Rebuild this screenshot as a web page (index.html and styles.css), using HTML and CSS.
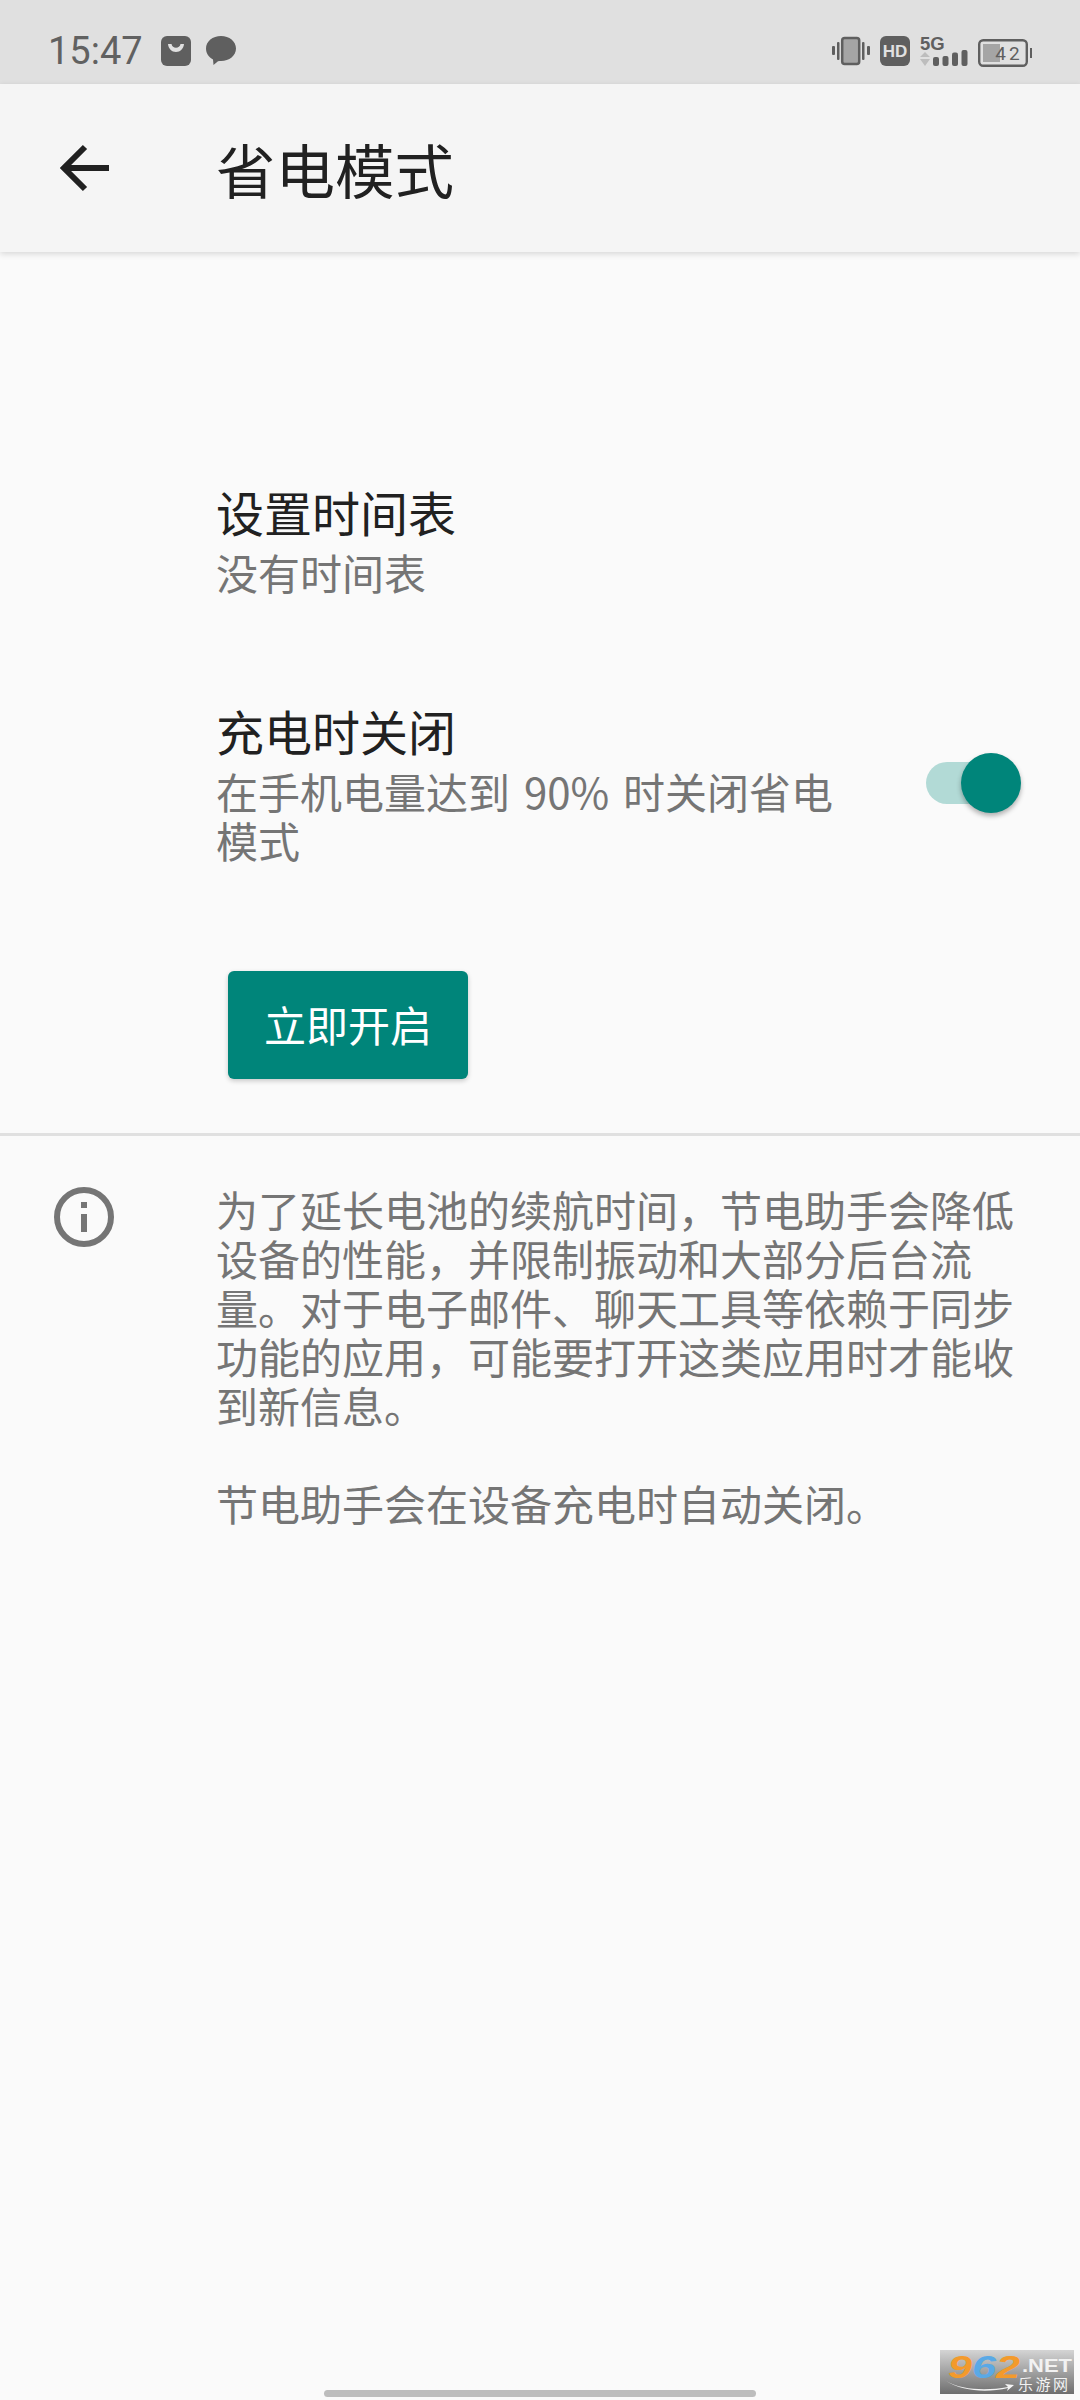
FILE: index.html
```html
<!DOCTYPE html>
<html lang="zh-CN">
<head>
<meta charset="UTF-8">
<title>省电模式</title>
<link rel="stylesheet" href="styles.css">
</head>
<body>
<div class="screen">
  <div class="status">
    <span class="time">15:47</span>
    <svg class="ico-bag" width="30" height="30" viewBox="0 0 30 30"><rect width="30" height="30" rx="6" fill="#5f5f5f"/><path d="M7 8h3.500c.5 2.500 2.300 3.800 4.500 3.800s4-1.300 4.500-3.800H23c-.4 4.700-3.700 8-8 8s-7.600-3.300-8-8z" fill="#e0e0e0"/></svg>
    <svg class="ico-chat" width="30" height="30" viewBox="0 0 30 30"><path d="M15 0c8.300 0 15 5.400 15 12.500S23.300 25 15 25c-.8 0-2 0-3 .2L7.500 29l-.5-5.600C2.800 21.200 0 17.200 0 12.500 0 5.400 6.700 0 15 0z" fill="#5f5f5f"/></svg>
    <span class="status-right">
      <svg width="38" height="30" viewBox="0 0 38 30"><rect x="10.200" y="2" width="17" height="26" rx="2.500" fill="#a5a5a5" stroke="#5f5f5f" stroke-width="2.500"/><rect x="5" y="6" width="2.500" height="18" rx="1" fill="#5f5f5f"/><rect x="30" y="6" width="2.500" height="18" rx="1" fill="#5f5f5f"/><rect x="0" y="10" width="3" height="9" rx="1" fill="#5f5f5f"/><rect x="35" y="10" width="3" height="9" rx="1" fill="#5f5f5f"/></svg>
      <svg width="30" height="30" viewBox="0 0 30 30"><rect width="30" height="30" rx="6" fill="#5f5f5f"/><text x="15" y="21" text-anchor="middle" class="ico-hd">HD</text></svg>
      <svg width="48" height="32" viewBox="0 0 48 32"><text x="0" y="15" class="ico-5g">5G</text><path d="M5 17l5 5H0zM5 31l-5-7h10z" fill="#bdbdbd"/><rect x="13" y="22" width="6" height="9" rx="2" fill="#5f5f5f"/><rect x="22.500" y="21" width="6" height="10" rx="2" fill="#5f5f5f"/><rect x="32" y="17.500" width="6" height="13.500" rx="2" fill="#5f5f5f"/><rect x="41.500" y="15" width="6" height="16" rx="2" fill="#5f5f5f"/></svg>
      <svg class="ico-battery" width="54" height="28" viewBox="0 0 54 28"><rect x="1.200" y="1.200" width="47.600" height="25.600" rx="4" fill="none" stroke="#5f5f5f" stroke-width="2.400"/><rect x="5" y="5" width="17" height="18" fill="#a5a5a5"/><rect x="52" y="9" width="2" height="10" fill="#5f5f5f"/><text x="31" y="21" text-anchor="middle" class="ico-batt">42</text></svg>
    </span>
  </div>

  <div class="toolbar">
    <svg class="back" width="49" height="48" viewBox="0 0 49 48"><path d="M49 24H4M25 3L4 24l21 21" fill="none" stroke="#212121" stroke-width="6"/></svg>
    <h1 class="title">省电模式</h1>
  </div>

  <div class="settings">
    <div class="row">
      <div class="row-text">
        <div class="row-title">设置时间表</div>
        <div class="row-sub">没有时间表</div>
      </div>
    </div>
    <div class="row row-charge">
      <div class="row-text">
        <div class="row-title">充电时关闭</div>
        <div class="row-sub">在手机电量达到 90% 时关闭省电模式</div>
      </div>
      <div class="switch"><span class="switch-thumb"></span></div>
    </div>
    <button class="btn">立即开启</button>
  </div>

  <div class="info">
    <svg class="info-ico" width="60" height="60" viewBox="0 0 60 60"><circle cx="30" cy="30" r="27" fill="none" stroke="#757575" stroke-width="6"/><rect x="27" y="15" width="6" height="6" fill="#757575"/><rect x="27" y="27" width="6" height="18" fill="#757575"/></svg>
    <div class="info-text">
      <p>为了延长电池的续航时间，节电助手会降低设备的性能，并限制振动和大部分后台流量。对于电子邮件、聊天工具等依赖于同步功能的应用，可能要打开这类应用时才能收到新信息。</p>
      <p>节电助手会在设备充电时自动关闭。</p>
    </div>
  </div>

  <div class="home-bar"></div>

  <svg class="mark" width="134" height="44" viewBox="0 0 134 44">
    <defs><linearGradient id="markbg" x1="0" y1="0" x2="0" y2="1"><stop offset="0" stop-color="#d4d4d4"/><stop offset="1" stop-color="#6e6e6e"/></linearGradient></defs>
    <rect width="134" height="44" fill="url(#markbg)"/>
    <text x="8" y="28" class="mark-num" textLength="72" lengthAdjust="spacingAndGlyphs"><tspan fill="#f39a2c">9</tspan><tspan fill="#5aa9e6">6</tspan><tspan fill="#f39a2c">2</tspan></text>
    <text x="82" y="22" class="mark-net" textLength="50" lengthAdjust="spacingAndGlyphs">.NET</text>
    <text x="78" y="40" class="mark-cn" textLength="50">乐游网</text>
    <path d="M6 31c16 9 40 10 62 6l-3-3 9 1-7 6 1-3c-22 5-46 3-62-7z" fill="#f4f4f4"/>
  </svg>
</div>
</body>
</html>
```

FILE: styles.css
```css
* { box-sizing: border-box; }
html, body { margin: 0; padding: 0; }
body {
  background: #fafafa;
  font-family: "Noto Sans CJK SC", Roboto, sans-serif;
  color: #212121;
}
.screen {
  position: relative;
  width: 1080px;
  height: 2400px;
  overflow: hidden;
  background: #fafafa;
}

/* status bar */
.status {
  height: 84px;
  background: #e0e0e0;
  display: flex;
  align-items: center;
  padding: 18px 48px 0;
  color: #616161;
}
.time {
  font-family: Roboto, sans-serif;
  font-size: 38px;
  width: 92px;
  margin-right: 21px;
  white-space: nowrap;
}
.ico-bag { margin-right: 15px; }
.status-right {
  margin-left: auto;
  display: flex;
  align-items: center;
  gap: 10px;
}
.status-right svg { display: block; overflow: visible; }
.ico-hd { font: 700 17px "Liberation Sans", sans-serif; fill: #e0e0e0; }
.ico-5g { font: 700 18.500px "Liberation Sans", sans-serif; fill: #5f5f5f; }
.ico-batt { font: 400 19px Roboto, sans-serif; fill: #5f5f5f; letter-spacing: 3px; }
.ico-battery { margin-top: 3px; }

/* toolbar */
.toolbar {
  height: 168px;
  background: #f5f5f5;
  display: flex;
  align-items: center;
  padding: 0 0 1px 60px;
  box-shadow: 0 2px 6px rgba(0, 0, 0, 0.14);
  position: relative;
}
.back { margin-right: 107px; margin-top: 1px; }
.title {
  margin: 0;
  font-size: 59.500px;
  font-weight: 400;
  line-height: 84px;
  color: #212121;
}

/* settings */
.settings {
  padding-top: 227px;
  height: 884px;
  border-bottom: 3px solid #e0e0e0;
}
.row {
  display: flex;
  align-items: center;
  padding-left: 216px;
}
.row-text { width: 640px; }
.row-charge { margin-top: 102px; }
.row-title {
  font-size: 48px;
  line-height: 64px;
  color: #212121;
}
.row-sub {
  font-size: 42px;
  line-height: 49px;
  margin-top: 4px;
  color: #757575;
  word-spacing: 4.500px;
}
.switch {
  position: relative;
  width: 74px;
  height: 42px;
  margin: 4px 0 0 70px;
  border-radius: 21px;
  background: #b2dad6;
}
.switch-thumb {
  position: absolute;
  right: -21px;
  top: -9px;
  width: 60px;
  height: 60px;
  border-radius: 50%;
  background: #00857a;
  box-shadow: 0 3px 5px rgba(0, 0, 0, 0.3);
}
.btn {
  display: block;
  margin: 107px 0 0 228px;
  width: 240px;
  height: 108px;
  padding: 0 0 4px;
  border: 0;
  border-radius: 6px;
  background: #00857a;
  color: #fff;
  font-family: inherit;
  font-size: 42px;
  box-shadow: 0 2px 5px rgba(0, 0, 0, 0.2);
}

/* info */
.info {
  display: flex;
  align-items: flex-start;
  padding: 51px 58px 0 54px;
}
.info-ico { flex: none; margin-right: 102px; }
.info-text {
  width: 806px;
  margin-top: -3px;
  font-size: 42px;
  line-height: 49px;
  color: #757575;
}
.info-text p { margin: 0 0 49px; }

/* gesture bar */
.home-bar {
  position: absolute;
  left: 324px;
  bottom: 3px;
  width: 432px;
  height: 7px;
  border-radius: 4px;
  background: #bdbdbd;
}

/* watermark */
.mark {
  position: absolute;
  left: 940px;
  top: 2350px;
}
.mark-num { font: italic 700 32px "Liberation Sans", sans-serif; }
.mark-net { font: 700 19px "Liberation Sans", sans-serif; fill: #f2f2f2; }
.mark-cn { font-size: 15px; fill: #f2f2f2; }
```
